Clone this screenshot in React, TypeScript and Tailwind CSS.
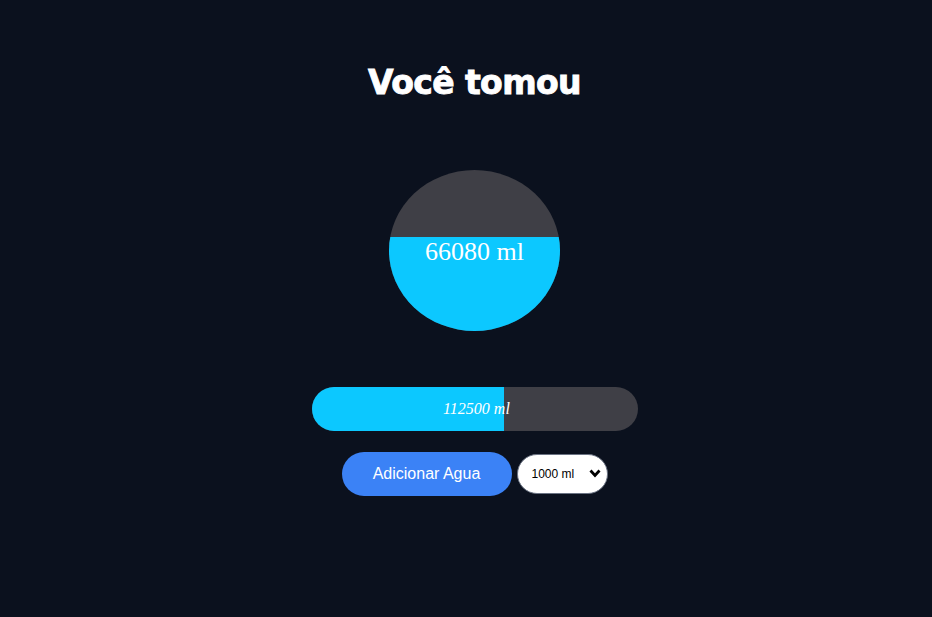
import { useState } from "react"

export default function App() {
  const [amount, setAmount] = useState("1000")
  const drank = 66080
  const goal = 112500
  const fill = 59

  return (
    <div className="min-h-screen w-full bg-[#0b111e] flex flex-col items-center pl-[17px] text-white">
      <h1 className="mt-[63px] text-[33px] leading-[40px] font-bold font-['DejaVu_Sans',sans-serif] tracking-[-0.6px] [-webkit-text-stroke:0.9px_white]">
        Você tomou
      </h1>

      <div className="mt-[67px] w-[171px] h-[161px] rounded-[50%] overflow-hidden bg-[#3f3f46] flex flex-col">
        <div className="h-[67px] shrink-0" />
        <div className="flex-1 bg-[#0cc8ff] flex justify-center">
          <span className="font-['Liberation_Serif',serif] text-[26px] leading-[30px]">
            {drank} ml
          </span>
        </div>
      </div>

      <div className="mt-[56px] w-[326px] h-[44px] rounded-full bg-[#3f3f46] overflow-hidden flex">
        <div
          className="h-full bg-[#0cc8ff] flex items-center justify-end"
          style={{ width: `${fill}%` }}
        >
          <span className="font-['Liberation_Serif',serif] italic text-[16px] mr-[-6px] whitespace-nowrap">
            {goal} ml
          </span>
        </div>
      </div>

      <div className="mt-[21px] flex items-center gap-[5px]">
        <button className="w-[170px] h-[44px] rounded-full bg-[#3b82f6] text-white font-['Liberation_Sans',sans-serif] text-[16px]">
          Adicionar Agua
        </button>
        <div className="relative">
          <select
            value={amount}
            onChange={(e) => setAmount(e.target.value)}
            className="appearance-none w-[91px] h-[40px] rounded-full bg-white text-black border border-gray-500 pl-[14px] text-[12px] font-['Liberation_Sans',sans-serif] outline-none"
          >
            <option value="250">250 ml</option>
            <option value="500">500 ml</option>
            <option value="1000">1000 ml</option>
          </select>
          <svg
            className="absolute right-[7px] top-[15px] pointer-events-none"
            width="12"
            height="9"
            viewBox="0 0 12 9"
          >
            <path d="M1.5 1.5 L6 6.5 L10.5 1.5" fill="none" stroke="black" strokeWidth="2.8" />
          </svg>
        </div>
      </div>
    </div>
  )
}
